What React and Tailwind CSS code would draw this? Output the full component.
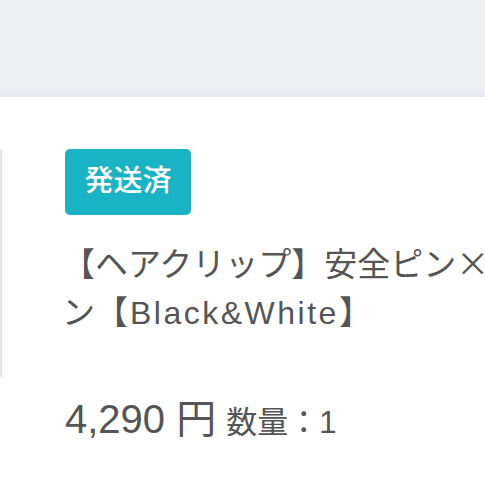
export default function App() {
  return (
    <div
      className="w-[485px] h-[485px] overflow-hidden bg-white"
      style={{ fontFamily: '"Liberation Sans", "Noto Sans CJK JP", sans-serif' }}
    >
      <div className="h-[97px] bg-[#eceff1] border-b-[6px] border-[#e8ebef]" />
      <div className="flex pt-[52px]">
        <div className="shrink-0 w-[100px] -ml-[98px] h-[228px] border-2 border-[#e4e4e4] bg-white" />
        <div className="pl-[63px] min-w-0">
          <div className="flex items-center justify-center w-[126px] h-[66px] rounded-[5px] bg-[#19b3c3] text-white text-[29px] font-medium">
            発送済
          </div>
          <div className="mt-[23px] text-[#555555] text-[33px] leading-[48px] -ml-[3px]">
            <div className="whitespace-nowrap">
              【ヘアクリップ】安全ピン
              <span style={{ fontFamily: '"Noto Sans CJK JP", sans-serif' }}>×</span>
            </div>
            <div className="whitespace-nowrap">
              ン【<span className="text-[32px] tracking-[2.5px] ml-[2px]">Black&amp;White</span>】
            </div>
          </div>
          <div className="mt-[52px] flex items-baseline text-[#555555] whitespace-nowrap">
            <span className="text-[40px]">4,290 円</span>
            <span className="text-[31px] ml-[10px]">数量：1</span>
          </div>
        </div>
      </div>
    </div>
  );
}
